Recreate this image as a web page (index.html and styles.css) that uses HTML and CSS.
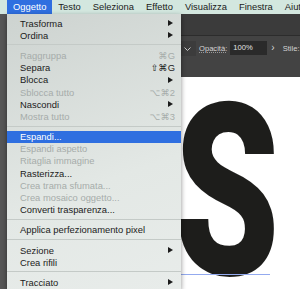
FILE: index.html
```html
<!DOCTYPE html>
<html lang="it">
<head>
    <meta charset="UTF-8">
    <meta name="viewport" content="width=device-width, initial-scale=1.0">
    <title>Oggetto</title>
    <link rel="stylesheet" href="styles.css">
</head>
<body>
    <div class="menubar">
        <span class="menubar-item active">Oggetto</span>
        <span class="menubar-item">Testo</span>
        <span class="menubar-item">Seleziona</span>
        <span class="menubar-item">Effetto</span>
        <span class="menubar-item">Visualizza</span>
        <span class="menubar-item">Finestra</span>
        <span class="menubar-item">Aiuto</span>
    </div>

    <div class="app">
        <div class="tools"></div>
        <div class="main">
            <div class="appbar"></div>
            <div class="controlbar">
                <span class="dropdown">
                    <svg width="7" height="4" viewBox="0 0 7 4"><polyline points="0.5,0.5 3.5,3.5 6.5,0.5" fill="none" stroke="#c8c8c8" stroke-width="1"/></svg>
                </span>
                <span class="ctl-label underline">Opacità:</span>
                <span class="field">100%</span>
                <span class="ctl-arrow">›</span>
                <span class="ctl-label">Stile:</span>
            </div>
            <div class="canvas">
                <span class="glyph">S</span>
                <div class="baseline"></div>
            </div>
        </div>
    </div>

    <ul class="menu">
        <li class="item"><span>Trasforma</span><span class="sub"></span></li>
        <li class="item"><span>Ordina</span><span class="sub"></span></li>
        <li class="sep"></li>
        <li class="item disabled"><span>Raggruppa</span><span class="key">⌘G</span></li>
        <li class="item"><span>Separa</span><span class="key">⇧⌘G</span></li>
        <li class="item"><span>Blocca</span><span class="sub"></span></li>
        <li class="item disabled"><span>Sblocca tutto</span><span class="key">⌥⌘2</span></li>
        <li class="item"><span>Nascondi</span><span class="sub"></span></li>
        <li class="item disabled"><span>Mostra tutto</span><span class="key">⌥⌘3</span></li>
        <li class="sep"></li>
        <li class="item selected"><span>Espandi...</span></li>
        <li class="item disabled"><span>Espandi aspetto</span></li>
        <li class="item disabled"><span>Ritaglia immagine</span></li>
        <li class="item"><span>Rasterizza...</span></li>
        <li class="item disabled"><span>Crea trama sfumata...</span></li>
        <li class="item disabled"><span>Crea mosaico oggetto...</span></li>
        <li class="item"><span>Converti trasparenza...</span></li>
        <li class="sep"></li>
        <li class="item"><span>Applica perfezionamento pixel</span></li>
        <li class="sep"></li>
        <li class="item"><span>Sezione</span><span class="sub"></span></li>
        <li class="item"><span>Crea rifili</span></li>
        <li class="sep"></li>
        <li class="item"><span>Tracciato</span><span class="sub"></span></li>
    </ul>
</body>
</html>
```

FILE: styles.css
```css
body {
    margin: 0;
    width: 300px;
    height: 289px;
    overflow: hidden;
    position: relative;
    font-family: "Liberation Sans", "DejaVu Sans", Arial, sans-serif;
    background: #3a3a3a;
}

.menubar {
    height: 14px;
    display: flex;
    padding-left: 7px;
    background: #d3e7df;
    font-size: 9.4px;
    line-height: 14px;
    color: #1a1a1a;
    white-space: nowrap;
}

.menubar-item {
    padding: 0 6px;
}

.menubar-item.active {
    background: #2f6fe0;
    color: #fff;
}

.app {
    display: flex;
    height: 275px;
}

.tools {
    width: 7px;
    background: #565656;
}

.main {
    flex: 1;
    display: flex;
    flex-direction: column;
    overflow: hidden;
}

.appbar {
    height: 21px;
    background: #3b3b3b;
    border-bottom: 1px solid #2c2c2c;
}

.controlbar {
    height: 41px;
    box-sizing: border-box;
    display: flex;
    align-items: flex-start;
    padding: 5px 0 0 171px;
    background: #434343;
    font-size: 7.6px;
    line-height: 15px;
    color: #d4d4d4;
    white-space: nowrap;
}

.dropdown {
    width: 18px;
    height: 15px;
    flex-shrink: 0;
    display: flex;
    align-items: center;
    justify-content: center;
    background: #3c3c3c;
    margin-right: 2px;
}

.ctl-label {
    margin-left: 1px;
}

.underline {
    text-decoration: underline dotted #9a9a9a;
}

.field {
    width: 34px;
    height: 14px;
    flex-shrink: 0;
    line-height: 14px;
    padding-left: 3px;
    margin-left: 3px;
    background: #2a2a2a;
    color: #e2e2e2;
}

.ctl-arrow {
    margin: 0 7px 0 4px;
    font-size: 10px;
    line-height: 14px;
}

.canvas {
    flex: 1;
    position: relative;
    background: #fff;
    overflow: hidden;
}

.glyph {
    position: absolute;
    left: 167px;
    top: -5px;
    font-family: Roboto, "Liberation Sans", sans-serif;
    font-weight: 900;
    font-size: 241px;
    line-height: 1;
    color: #1d1d1b;
    transform: scaleX(0.7);
    transform-origin: left top;
}

.baseline {
    position: absolute;
    left: 0;
    top: 197px;
    width: 263px;
    height: 1px;
    background: #93aaef;
}

.menu {
    position: absolute;
    left: 7px;
    top: 14px;
    bottom: 0;
    width: 174px;
    margin: 0;
    padding: 3px 0 0;
    list-style: none;
    box-sizing: border-box;
    overflow: hidden;
    background: linear-gradient(160deg, #cdd3d0, #e3e8e5 60%, #e8ecea);
    box-shadow: 0 2px 5px rgba(0, 0, 0, 0.45);
    font-size: 9.4px;
    color: #1b1b1b;
}

.item {
    height: 12.2px;
    display: flex;
    align-items: center;
    justify-content: space-between;
    padding: 0 6px 0 13px;
    white-space: nowrap;
}

.item.disabled {
    color: #a6acaa;
}

.item.selected {
    background: #2f6fe0;
    color: #fff;
}

.key {
    font-size: 9.4px;
}

.sub {
    width: 0;
    height: 0;
    margin-right: 2px;
    border-top: 3px solid transparent;
    border-bottom: 3px solid transparent;
    border-left: 5px solid #1b1b1b;
}

.sep {
    height: 1px;
    margin: 3px 0 4px;
    background: #c4cac7;
}
```
